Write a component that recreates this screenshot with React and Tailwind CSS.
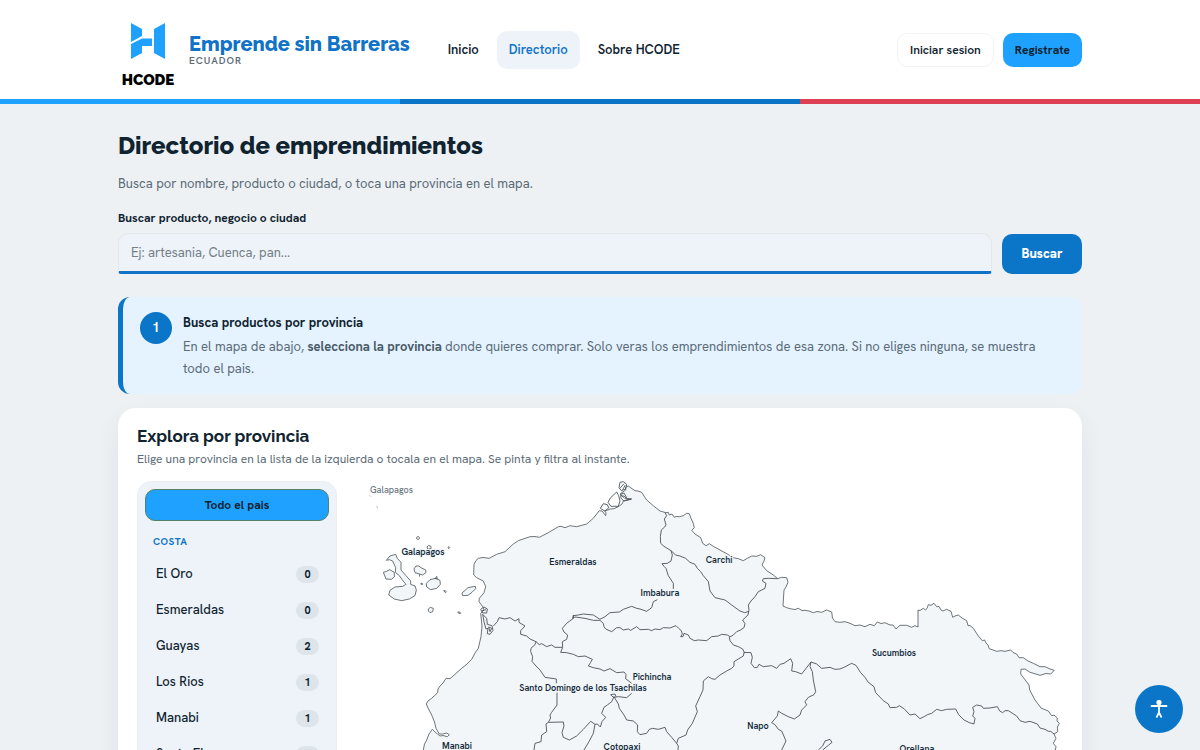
import React from 'react';

const navLinks = [
  { label: 'Inicio', active: false },
  { label: 'Directorio', active: true },
  { label: 'Sobre HCODE', active: false },
];

const costa = [
  { name: 'El Oro', count: 0 },
  { name: 'Esmeraldas', count: 0 },
  { name: 'Guayas', count: 2 },
  { name: 'Los Rios', count: 1 },
  { name: 'Manabi', count: 1 },
  { name: 'Santa Elena', count: 0 },
];

const mapLabels = [
  { name: 'Galapagos', x: 423, y: 555 },
  { name: 'Esmeraldas', x: 573, y: 565 },
  { name: 'Carchi', x: 719, y: 563 },
  { name: 'Imbabura', x: 660, y: 596 },
  { name: 'Sucumbios', x: 894, y: 656 },
  { name: 'Pichincha', x: 652, y: 680 },
  { name: 'Santo Domingo de los Tsachilas', x: 583, y: 691 },
  { name: 'Napo', x: 758, y: 729 },
  { name: 'Manabi', x: 457, y: 749 },
  { name: 'Cotopaxi', x: 622, y: 750 },
  { name: 'Orellana', x: 917, y: 752 },
];

const mainland =
  'M625.7 490 L625.7 487.3 628.3 486 631 488 635 490.7 638 491 641.7 492.3 644 496 646.7 500 653.3 505.7 660 511 666 512.7 668.3 512.3 669.3 515 672 514 674.3 517.3 676 516.5 679.3 516.7 683.3 515.7 686.7 513.3 689.3 513.7 691 518.3 693.3 523.3 694.3 527.7 691.7 530.3 695 534 700.7 537.7 702.7 543.3 706 545.7 709.3 543.7 713.3 546.3 720 550 727.3 554 733.3 557.7 738.3 558.7 743.3 560.7 747.3 558.3 751.7 556 756.7 556.3 760.7 554.7 765 557.7 764 561 762 565 766.7 570.7 773.3 575 777.7 578.7 781.7 577.3 786.7 577.7 788 582.3 786 587 784 590 783 606 786.7 607.7 791.7 609 795 609.5 798.3 608.3 802 610.5 805 610.3 809 611 813.3 612.7 817 611.5 821.7 612.3 826.7 610 831.7 612 832.5 618 835 621.7 840 622.3 845 621.7 850 623.3 855 625.7 860 625 865 626.7 870 624.3 874.3 625.7 877.3 622 881 623.5 885 622.7 890 625 893 625 896 629 900 625.3 906.7 625.3 911.7 627.3 915 625.7 918 627 918 610 920 610.5 923.3 608.3 925.3 610 927 608.5 928.3 604.7 931 605.3 934 603.3 936.7 606.7 939 606.5 941 610 943 611 946.7 609.3 949 610.5 951 611.3 952.7 617.3 955 616 958.3 615 962 618 966.7 620.7 968 625.7 970 625.5 973.3 628.3 978.3 636 982.3 640.7 984.7 640 986 643 988 645 989.3 648.7 993 650 996.7 651.3 1001 650.7 1005 651.3 1010.7 650 1013 652.5 1016.7 654 1019 657.7 1023.3 657.7 1028 661 1033.3 663.3 1040 666.7 1045 666.7 1050 669 1054.3 670.3 1050.7 674 1046 673.5 1040 675.3 1030 672.3 1025 669 1021 669.3 1020.7 674 1029 685 1029.7 690 1035 700 1041 708 1048.3 711 1051.7 715.7 1054 715 1057.3 718 1057 721 1059.3 723.3 1057.5 727 1057.7 731.7 1054 734 1056 738.3 1053.3 743.3 1056 746.7 1055 751.7 1058 790 1010 850 900 900 700 980 560 1000 450 900 430 800 423.3 750 424.5 744 426.7 740 429 734 432.3 729.3 435 732 440 736 443 735.5 447.3 736.7 449.3 734.7 446.7 733 443 734 439.3 734 436 728.3 434.5 722 431.7 715 428 708 426.3 704 428 701 431.7 698.3 437.7 692.7 438 689 440 686 443 683 446 678.3 450 678.7 461.7 668.3 467 664 471.7 659.3 475 653 478.3 648.3 481 636.7 482 626 481 616.7 480.7 613.3 484 610 482.7 606.7 479 601.7 479.3 598.3 484 592.7 485.7 586.7 483.3 581 476.7 577.7 473.7 575 474 564.3 476 560.5 478.3 558.3 483 557.5 489.3 558.3 496.7 554.3 505 551.7 513.3 544 518.3 540.7 530 536.7 535 536.5 539.3 537.3 548.3 532.7 558.3 526.7 561 526.3 565 527.7 570 525.7 576.7 526.7 586.7 524 593.3 518.3 599.3 510.7 602 511 605.7 515.7 606 512.3 604.5 511 607 510.3 610 509 614 508.7 618.3 506.7 622 504 623.3 501 626 500.3 631 499.3 626 498 624 496 621.7 496 620.5 493.5 Z';

// Each sheet is digitised at three times the size of the map.
const sheets = [
  {
    origin: 'translate(460 475) scale(0.33333)',
    paths: [
      'M592 374 L580 380 575 398 560 409 540 402 530 400 515 394 490 403 478 411 450 413 435 425 420 433 400 420 370 417 355 420 340 422 338 430 345 426 375 430 400 436 420 436 430 445 432 455 437 462 455 470 470 458 480 458 490 465 505 462 512 466 530 455 540 464',
      'M62 403 L72 396 82 402 80 414 68 414 Z M65 408 L78 404',
      'M68 418 L80 430 82 448 96 452 99 466 90 478 82 476 84 460 78 462 72 440 Z M86 456 L95 460 90 470 Z',
      'M480 22 L490 20 500 28 497 42 484 47 477 38 Z M480 40 L492 26 M488 44 L496 30',
      'M470 51 L452 68 444 82 453 94 475 94 480 78 476 62 Z',
      'M430 86 L442 89 446 99 434 108 421 100 Z',
      'M482 58 L492 54 499 66 497 72 515 72 492 78 483 70 Z M485 62 L494 70',
    ],
  },
  {
    origin: 'translate(640 475) scale(0.33333)',
    paths: [
      'M75 113 L80 122 73 132 78 150 74 156 64 165 61 185 62 205 72 214 93 227 107 240 120 243 137 250 150 262 165 268 172 280 182 290 190 302 205 320 210 348 225 368 255 375 275 390 300 408 314 413 327 409',
      'M93 227 L97 240 93 258 82 265 66 266 72 274 78 280 85 302 100 325 100 342',
      'M413 311 L385 310 370 311 367 318 378 325 375 340 355 350 345 365 333 378 325 390 327 405 324 420 308 435 315 446 312 458 300 466 290 470 280 480 268 487 270 497 280 510 295 515 308 522 314 535',
      'M0 464 L25 463 35 467 45 462 60 464 70 458 90 459 108 452 116 460 124 467 127 477 122 485 129 485 132 475 145 480 150 490 163 497 175 495 200 497 215 485 235 483 245 478 262 480 270 485',
    ],
  },
  {
    origin: 'translate(400 600) scale(0.33333)',
    paths: [
      'M280 78 L292 65 297 53 315 57 330 53 345 63 357 56 357 67 375 78 362 92 362 103 380 108 390 117 408 125 418 134 425 131 440 140 455 135 465 142 487 142',
      'M408 125 L405 134 393 145 392 155 398 170 396 184 408 198 420 210 435 232 469 237 469 250',
      'M471 278 L471 315 455 337 450 345 452 354 445 367 490 366 492 378 486 398 490 412 508 420 530 408 550 388 572 364 585 373 592 372 601 381 606 365 617 352 605 340 612 322 622 315 635 305 642 290',
      'M445 367 L438 372 440 395 425 405 423 425 405 430 402 450',
      'M585 373 L580 400 567 425 552 450',
      'M642 290 L655 312 658 325 672 345 680 360 700 363 713 375 712 395 720 404',
      'M520 45 L520 55 500 70 487 85 492 96 503 105 500 118 487 125 488 142 482 157 500 158 520 163 535 170 555 168 577 178 572 187 565 198 580 203 600 207 612 213 630 206 650 218 672 216 678 223 677 236 695 250',
      'M695 280 L680 293 655 290 640 292 632 284 645 282 648 290',
    ],
  },
  {
    origin: 'translate(620 600) scale(0.33333)',
    paths: [
      'M372 158 L370 168 342 185 342 198 335 205 320 213 300 225 285 238 275 236 265 230 250 243 249 270 240 290 227 318 232 335 217 370 203 390 198 405 175 415 170 430 175 438 174 450',
      'M372 157 L393 158 397 172 393 190 403 203 412 202 417 193 430 200 455 197 470 205 480 193 492 190 512 176 518 190 515 213 527 215 545 222 573 186 590 192 605 205 630 202 645 208 660 207',
      'M573 186 L570 200 577 215 580 240 587 275 582 284 565 292 555 305 560 315 545 330 540 345 523 357 505 350 485 340 475 333 472 348 455 368 465 374 475 388 485 393 498 423 485 450',
      'M60 404 L80 400 88 388 98 385 115 388 135 382 140 395 155 412 170 430',
      'M595 450 L608 438 615 423 630 418 636 427 625 436 608 450',
    ],
  },
  {
    origin: 'translate(840 590) scale(0.33333)',
    paths: [
      'M0 237 L12 232 35 220 48 226 62 248 75 262 84 276 102 290 107 308 130 332 145 342 150 353 170 352 178 347 192 356 210 375 225 372 240 386 254 379 262 374 275 370 290 358 305 362 320 358 347 357 356 374 372 390 388 398 402 402 405 385 398 378 402 365 398 352 410 345 425 348 430 355 450 354 472 350 479 363 488 368 495 362 505 362 530 378 540 392 555 397 570 394 592 402 600 414 615 418 625 424 632 424 642 432',
    ],
  },
];

const galapagos = [
  'M79 256 L90 243 107 238 112 250 123 262 123 285 138 302 152 318 152 328 165 333 169 345 165 362 148 372 125 377 103 372 86 360 90 346 105 336 128 334 138 328 127 315 118 302 106 292 107 278 98 258 88 254 Z',
  'M70 292 L80 289 89 284 103 292 103 306 94 313 78 312 Z',
  'M168 273 L176 273 183 278 197 285 198 293 188 300 165 293 162 282 Z M178 298 L179 305',
  'M199 325 L210 314 227 310 240 316 241 328 230 340 212 344 200 336 Z M226 311 L230 304 232 312 Z',
  'M170 187 L175 184 179 189 175 194 170 191 Z',
  'M201 216 L206 211 213 214 213 221 204 223 Z',
  'M264 217 L267 215 269 218 266 221 Z',
  'M182 326 L186 324 188 328 184 329 Z',
  'M251 347 L255 347 259 350 256 353 Z',
  'M205 402 L211 397 220 400 218 410 210 413 205 408 Z',
  'M293 411 L299 411 302 415 297 416 Z',
  'M306 354 L324 338 346 334 347 341 336 352 324 361 308 362 Z',
  'M30 62 L32 64 M50 95 L53 97',
];

const Logo = () => (
  <div className="flex w-[60px] flex-col items-center gap-[13px]">
    <svg viewBox="0 0 34 36" className="h-9 w-[34px]" fill="#1fa2ff" aria-hidden="true">
      <path d="M0 0 L11 6 V13 L0 19 Z" />
      <path d="M0 21 L11 15.5 H21 V23 H11 V30 L0 36 Z" />
      <path d="M34 0 V36 L23 30 V6 Z" />
    </svg>
    <span className="font-[Raleway,Lato,sans-serif] text-[15px] leading-4 font-black text-black">HCODE</span>
  </div>
);

const Header = () => (
  <header className="bg-white">
    <div className="mx-auto flex min-h-[99px] w-full max-w-[964px] flex-wrap items-center">
      <a href="#" className="flex items-center gap-[11px] pt-3">
        <Logo />
        <span className="flex flex-col pb-[14px]">
          <span className="font-[Raleway,'Open_Sans',sans-serif] text-[20px] leading-6 font-extrabold text-[#1173c7]">
            Emprende sin Barreras
          </span>
          <span className="text-[10px] leading-[10px] font-semibold tracking-widest text-[#5b6b77]">ECUADOR</span>
        </span>
      </a>
      <nav className="ml-[26px] flex items-center gap-[6px]">
        {navLinks.map((link) => (
          <a
            key={link.label}
            href="#"
            className={`rounded-[10px] px-3 py-[9px] text-[13px] leading-5 font-semibold ${
              link.active ? 'bg-[#edf3f8] text-[#1173c7]' : 'text-[#102330]'
            }`}
          >
            {link.label}
          </a>
        ))}
      </nav>
      <div className="ml-auto flex items-center gap-[9px]">
        <button type="button" className="h-[34px] rounded-[10px] border border-[#f1f4f6] px-3 text-[12px] font-semibold text-[#102330]">
          Iniciar sesion
        </button>
        <button type="button" className="h-[34px] rounded-[10px] bg-[#1fa2ff] px-3 text-[12px] font-bold text-[#102330]">
          Registrate
        </button>
      </div>
    </div>
    <div className="grid h-[5px] grid-cols-3">
      <div className="bg-[#1fa2ff]" />
      <div className="bg-[#0b76c8]" />
      <div className="bg-[#dd3f53]" />
    </div>
  </header>
);

const ProvinceMap = () => (
  <svg viewBox="350 481 713 560" className="block w-full" role="img" aria-label="Mapa de provincias">
    <g fill="#f3f6f8" stroke="#4a5359" strokeWidth="0.8" strokeLinejoin="round">
      <path d={mainland} />
      <g transform="translate(360 475) scale(0.33333)" strokeWidth="2.4">
        {galapagos.map((d) => (
          <path key={d} d={d} />
        ))}
      </g>
      {sheets.map((sheet) => (
        <g key={sheet.origin} transform={sheet.origin} strokeWidth="2.7" fill="none">
          {sheet.paths.map((d) => (
            <path key={d} d={d} />
          ))}
        </g>
      ))}
    </g>
    <text x="370" y="493" className="fill-[#66747e] text-[9px] font-medium">
      Galapagos
    </text>
    {mapLabels.map((label) => (
      <text
        key={label.name}
        x={label.x}
        y={label.y}
        textAnchor="middle"
        stroke="#f3f6f8"
        strokeWidth="2"
        paintOrder="stroke"
        className="fill-[#102a3c] text-[9px] font-semibold"
      >
        {label.name}
      </text>
    ))}
  </svg>
);

const ProvinceList = () => (
  <aside className="rounded-[14px] border border-[#e9eff3] bg-[#edf3f8] p-[7px]">
    <button type="button" className="h-8 w-full rounded-[10px] border border-[#55806a] bg-[#1fa2ff] text-[12px] font-bold text-[#102330]">
      Todo el pais
    </button>
    <h3 className="mt-[13px] px-2 text-[10px] leading-4 font-bold tracking-wider text-[#1173c7]">COSTA</h3>
    <ul className="mt-[6px]">
      {costa.map((province) => (
        <li key={province.name}>
          <button type="button" className="flex h-9 w-full items-center justify-between pr-[10px] pl-[11px] text-[13px] font-medium text-[#102330]">
            {province.name}
            <span className="w-[23px] rounded-full bg-[#dde5ea] text-center text-[11px] leading-[17px] font-bold">
              {province.count}
            </span>
          </button>
        </li>
      ))}
    </ul>
  </aside>
);

const App = () => {
  return (
    <div className="min-h-screen bg-[#edf1f4] font-['Hanken_Grotesk','HK_Grotesk',Inter,sans-serif] text-[#102330]">
      <Header />
      <main className="mx-auto w-full max-w-[964px] pt-[27px] pb-8">
        <h1 className="font-[Raleway,'Open_Sans',sans-serif] text-[24px] leading-[30px] font-extrabold">Directorio de emprendimientos</h1>
        <p className="mt-3 text-[13px] leading-[22px] text-[#5b6b77]">
          Busca por nombre, producto o ciudad, o toca una provincia en el mapa.
        </p>

        <form className="mt-[14px]" onSubmit={(e) => e.preventDefault()}>
          <label htmlFor="buscar" className="block text-[12px] leading-[18px] font-bold">
            Buscar producto, negocio o ciudad
          </label>
          <div className="mt-[6px] flex items-end gap-[10px]">
            <input
              id="buscar"
              type="search"
              placeholder="Ej: artesania, Cuenca, pan..."
              className="h-[41px] min-w-0 flex-1 rounded-t-[10px] rounded-b-[3px] border border-b-[3px] border-[#e1e7eb] border-b-[#1173c7] bg-[#edf3f9] px-3 text-[13px] outline-none placeholder:text-[#757f87]"
            />
            <button type="submit" className="h-10 w-20 rounded-[10px] bg-[#0b76c8] text-[13px] font-extrabold text-white">
              Buscar
            </button>
          </div>
        </form>

        <section className="mt-[23px] flex gap-[11px] rounded-xl border-l-[5px] border-[#0b76c8] bg-[#e4f3ff] pt-[15px] pr-[17px] pb-[14px] pl-[17px]">
          <span className="flex size-8 shrink-0 items-center justify-center rounded-full bg-[#0b76c8] text-[13px] font-bold text-white">
            1
          </span>
          <div>
            <h2 className="text-[13px] leading-[22px] font-bold">Busca productos por provincia</h2>
            <p className="mt-[2px] text-[13px] leading-[22px] text-[#5b6b77]">
              En el mapa de abajo, <strong className="font-bold text-[#4b5c69]">selecciona la provincia</strong> donde quieres comprar. Solo veras los
              emprendimientos de esa zona. Si no eliges ninguna, se muestra todo el pais.
            </p>
          </div>
        </section>

        <section className="mt-[14px] rounded-[18px] bg-white px-[19px] pt-4 pb-5 shadow-[0_10px_28px_rgba(16,35,48,0.06)]">
          <h2 className="font-[Raleway,'Open_Sans',sans-serif] text-[17px] leading-6 font-bold">Explora por provincia</h2>
          <p className="mt-[2px] text-[12px] leading-[18px] text-[#5b6b77]">
            Elige una provincia en la lista de la izquierda o tocala en el mapa. Se pinta y filtra al instante.
          </p>
          <div className="mt-[13px] grid grid-cols-[200px_minmax(0,1fr)] gap-[13px]">
            <ProvinceList />
            <ProvinceMap />
          </div>
        </section>
      </main>

      <button
        type="button"
        aria-label="Accesibilidad"
        className="fixed right-[17px] bottom-[17px] flex size-12 items-center justify-center rounded-full bg-[#0b76c8] text-white"
      >
        <svg viewBox="0 0 18 18" className="size-[18px]" fill="none" stroke="currentColor" strokeWidth="1.8" strokeLinecap="round">
          <circle cx="9" cy="2.5" r="2.6" fill="currentColor" stroke="none" />
          <path d="M1.5 6 H16.5 M9 6 V12.5 L6.8 16.8 M9 12.5 L11.2 16.8" />
        </svg>
      </button>
    </div>
  );
};

export default App;
